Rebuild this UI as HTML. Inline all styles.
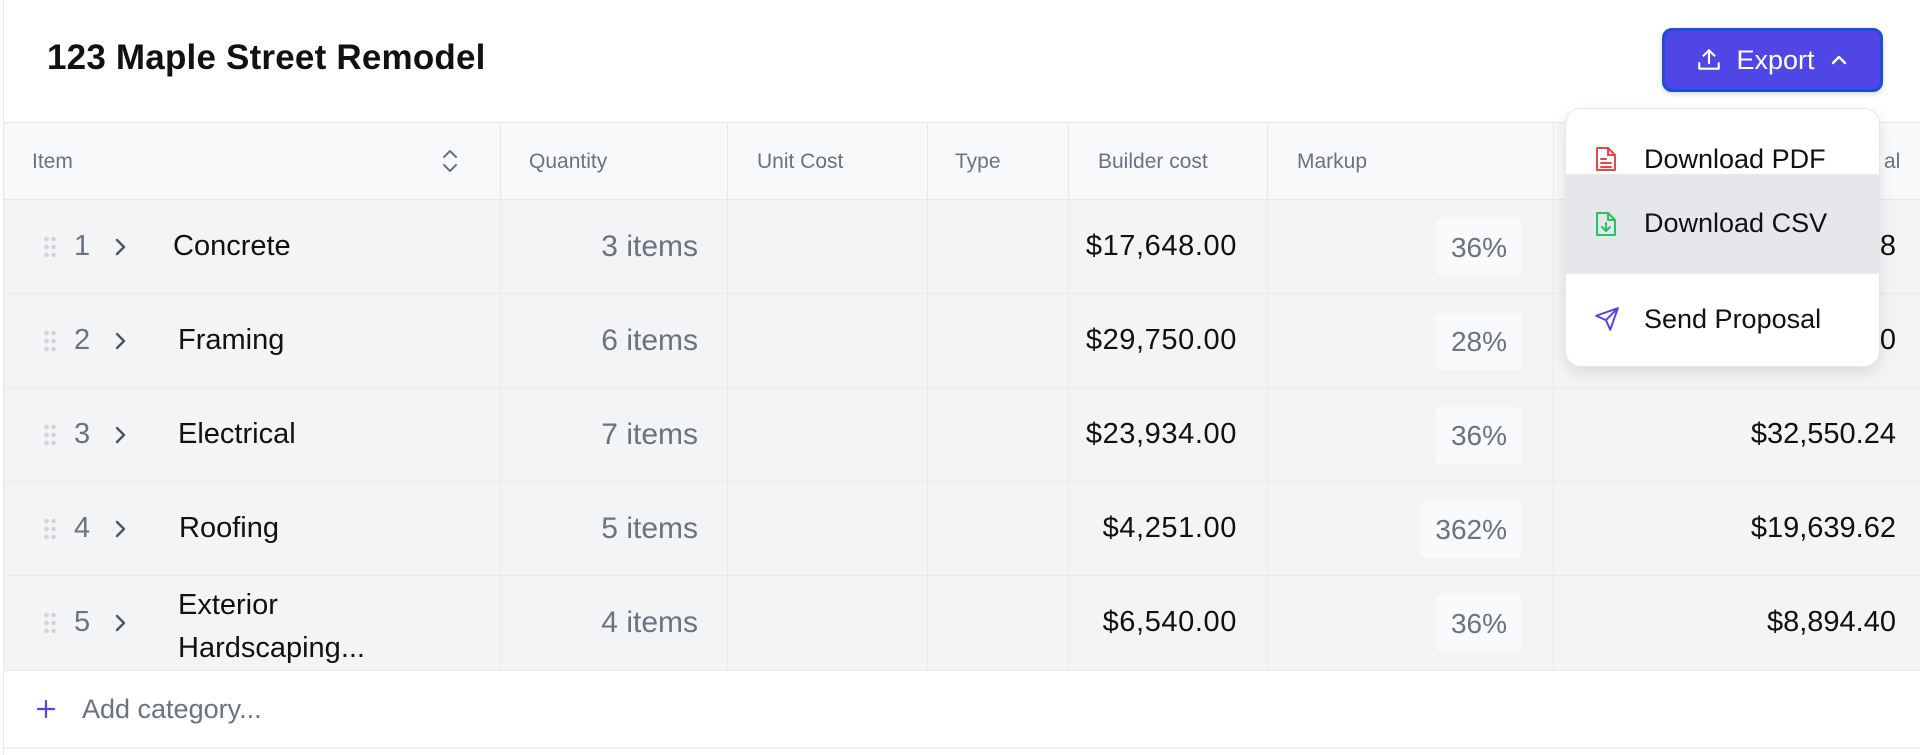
<!DOCTYPE html>
<html><head><style>
*{box-sizing:border-box;margin:0;padding:0}
body{width:1920px;height:755px;background:#fff;font-family:"Liberation Sans",sans-serif;position:relative;overflow:hidden;color:#111}
.frame{position:absolute;left:3px;top:0;width:1917px;height:755px;border-left:1px solid #e5e7eb}
h1{position:absolute;left:47px;top:38px;font-size:35px;font-weight:700;color:#111;letter-spacing:0.2px}
.btn{position:absolute;left:1662px;top:28px;width:221px;height:64px;background:#4f46e5;border:3px solid #1d4ed8;border-radius:10px;color:#fff;font-size:27px;display:flex;align-items:center;justify-content:center;gap:14px;box-shadow:0 2px 6px rgba(0,0,0,.15)}
.hdr{position:absolute;left:4px;top:122px;width:1916px;height:78px;background:#f8f9fb;border-top:1px solid #e5e7eb;border-bottom:1px solid #e5e7eb}
.h{position:absolute;top:27px;font-size:21px;color:#6b7280}
.vl{position:absolute;top:122px;height:549px;width:1px;background:#e8e9ec}
.row{position:absolute;left:4px;width:1916px;height:94px;background:#f3f4f6;border-bottom:1px solid #e9eaee}
.row .c{position:absolute;font-size:29px}
.num{left:70px;color:#6b7280;top:30px}
.nm{left:174px;color:#111}
.qty{right:1222px;color:#6b7280;top:30px;font-size:30px!important}
.bc{right:683px;color:#111;top:30px;letter-spacing:0.6px}
.mk{position:absolute;right:398px;top:19px;height:57px;padding:0 15px;background:#f9fafb;border-radius:6px;color:#6b7280;font-size:28px;line-height:57px}
.tot{right:24px;top:30px;color:#111}
.dot{position:absolute;left:40px;top:36px}
.chev{position:absolute;left:110px;top:36px}
.add{position:absolute;left:4px;top:671px;width:1916px;height:78px;border-bottom:2px solid #eef0f2}
.dd{position:absolute;left:1565px;top:108px;width:315px;height:259px;background:#fff;border:1px solid #e5e7eb;border-radius:16px;box-shadow:0 6px 16px rgba(0,0,0,.1);overflow:hidden}
.di{position:absolute;left:0;width:315px;font-size:27px;color:#111}
.di span{position:absolute;left:78px}
.di svg{position:absolute;left:28px}
</style></head><body>
<div class="frame"></div>
<h1>123 Maple Street Remodel</h1>
<div class="hdr">
<div class="h" style="left:28px">Item</div>
<svg style="position:absolute;left:436px;top:24px" width="20" height="28" viewBox="0 0 20 28" fill="none" stroke="#6b7280" stroke-width="2" stroke-linecap="round" stroke-linejoin="round"><path d="M4 10l6-6 6 6M4 18l6 6 6-6"/></svg>
<div class="h" style="left:525px">Quantity</div>
<div class="h" style="left:753px">Unit Cost</div>
<div class="h" style="left:951px">Type</div>
<div class="h" style="left:1094px">Builder cost</div>
<div class="h" style="left:1293px">Markup</div>
<div class="h" style="left:1880px">al</div>
</div>

<div class="row" style="top:200px"><svg class="dot" width="12" height="22"><g fill="#d1d5db"><circle cx="2.5" cy="3" r="2.3"/><circle cx="9.5" cy="3" r="2.3"/><circle cx="2.5" cy="11" r="2.3"/><circle cx="9.5" cy="11" r="2.3"/><circle cx="2.5" cy="19" r="2.3"/><circle cx="9.5" cy="19" r="2.3"/></g></svg><div class="c num">1</div><svg class="chev" width="14" height="22" fill="none" stroke="#4b5563" stroke-width="2.4" stroke-linecap="round" stroke-linejoin="round"><path d="M3 4l7 7-7 7"/></svg><div class="c nm" style="top:30px;left:169px">Concrete</div><div class="c qty">3 items</div><div class="c bc">$17,648.00</div><div class="mk">36%</div><div class="c tot">$24,001.28</div></div>
<div class="row" style="top:294px"><svg class="dot" width="12" height="22"><g fill="#d1d5db"><circle cx="2.5" cy="3" r="2.3"/><circle cx="9.5" cy="3" r="2.3"/><circle cx="2.5" cy="11" r="2.3"/><circle cx="9.5" cy="11" r="2.3"/><circle cx="2.5" cy="19" r="2.3"/><circle cx="9.5" cy="19" r="2.3"/></g></svg><div class="c num">2</div><svg class="chev" width="14" height="22" fill="none" stroke="#4b5563" stroke-width="2.4" stroke-linecap="round" stroke-linejoin="round"><path d="M3 4l7 7-7 7"/></svg><div class="c nm" style="top:30px">Framing</div><div class="c qty">6 items</div><div class="c bc">$29,750.00</div><div class="mk">28%</div><div class="c tot">$38,080.00</div></div>
<div class="row" style="top:388px"><svg class="dot" width="12" height="22"><g fill="#d1d5db"><circle cx="2.5" cy="3" r="2.3"/><circle cx="9.5" cy="3" r="2.3"/><circle cx="2.5" cy="11" r="2.3"/><circle cx="9.5" cy="11" r="2.3"/><circle cx="2.5" cy="19" r="2.3"/><circle cx="9.5" cy="19" r="2.3"/></g></svg><div class="c num">3</div><svg class="chev" width="14" height="22" fill="none" stroke="#4b5563" stroke-width="2.4" stroke-linecap="round" stroke-linejoin="round"><path d="M3 4l7 7-7 7"/></svg><div class="c nm" style="top:30px">Electrical</div><div class="c qty">7 items</div><div class="c bc">$23,934.00</div><div class="mk">36%</div><div class="c tot">$32,550.24</div></div>
<div class="row" style="top:482px"><svg class="dot" width="12" height="22"><g fill="#d1d5db"><circle cx="2.5" cy="3" r="2.3"/><circle cx="9.5" cy="3" r="2.3"/><circle cx="2.5" cy="11" r="2.3"/><circle cx="9.5" cy="11" r="2.3"/><circle cx="2.5" cy="19" r="2.3"/><circle cx="9.5" cy="19" r="2.3"/></g></svg><div class="c num">4</div><svg class="chev" width="14" height="22" fill="none" stroke="#4b5563" stroke-width="2.4" stroke-linecap="round" stroke-linejoin="round"><path d="M3 4l7 7-7 7"/></svg><div class="c nm" style="top:30px;left:175px">Roofing</div><div class="c qty">5 items</div><div class="c bc">$4,251.00</div><div class="mk">362%</div><div class="c tot">$19,639.62</div></div>
<div class="row" style="top:576px;height:95px"><svg class="dot" width="12" height="22"><g fill="#d1d5db"><circle cx="2.5" cy="3" r="2.3"/><circle cx="9.5" cy="3" r="2.3"/><circle cx="2.5" cy="11" r="2.3"/><circle cx="9.5" cy="11" r="2.3"/><circle cx="2.5" cy="19" r="2.3"/><circle cx="9.5" cy="19" r="2.3"/></g></svg><div class="c num">5</div><svg class="chev" width="14" height="22" fill="none" stroke="#4b5563" stroke-width="2.4" stroke-linecap="round" stroke-linejoin="round"><path d="M3 4l7 7-7 7"/></svg><div class="c nm" style="top:8px;line-height:43px">Exterior<br>Hardscaping...</div><div class="c qty">4 items</div><div class="c bc">$6,540.00</div><div class="mk">36%</div><div class="c tot">$8,894.40</div></div>

<div class="vl" style="left:500px"></div><div class="vl" style="left:727px"></div><div class="vl" style="left:927px"></div><div class="vl" style="left:1068px"></div><div class="vl" style="left:1267px"></div><div class="vl" style="left:1553px"></div>

<div class="add"><svg style="position:absolute;left:32px;top:28px" width="20" height="20" stroke="#4f46e5" stroke-width="2.2" stroke-linecap="round"><path d="M10 2v16M2 10h16"/></svg><div style="position:absolute;left:78px;top:23px;font-size:27px;color:#6b7280">Add category...</div></div>

<div class="btn"><svg width="26" height="26" viewBox="0 0 24 24" fill="none" stroke="#fff" stroke-width="2" stroke-linecap="round" stroke-linejoin="round"><path d="M12 15V3M7 8l5-5 5 5M3 15v5h18v-5"/></svg><span>Export</span><svg width="20" height="20" viewBox="0 0 20 20" fill="none" stroke="#fff" stroke-width="2.4" stroke-linecap="round" stroke-linejoin="round"><path d="M4 13l6-6 6 6"/></svg></div>

<div class="dd">
<div class="di" style="top:0;height:65px"><svg style="top:37px" width="24" height="27" viewBox="0 0 24 27" fill="none" stroke="#ef4444" stroke-width="2" stroke-linejoin="round" stroke-linecap="round"><path d="M3 2h11l7 7v15H3z"/><path d="M14 2v7h7M7 13h5M7 17h10M7 21h10"/></svg><span style="top:35px">Download PDF</span></div>
<div class="di" style="top:65px;height:100px;background:#e5e7eb;border-bottom:1px solid #e5e7eb"><svg style="top:37px" width="24" height="27" viewBox="0 0 24 27" fill="none" stroke="#22c55e" stroke-width="2" stroke-linejoin="round" stroke-linecap="round"><path d="M3 2h11l7 7v15H3z"/><path d="M14 2v7h7M12 12v8M8 16l4 4 4-4"/></svg><span style="top:34px">Download CSV</span></div>
<div class="di" style="top:165px;height:94px"><svg style="top:32px" width="26" height="26" viewBox="0 0 24 24" fill="none" stroke="#4f46e5" stroke-width="1.8" stroke-linejoin="round" stroke-linecap="round"><path d="M22 2L11 13M22 2l-7 20-4-9-9-4z"/></svg><span style="top:30px">Send Proposal</span></div>
</div>
</body></html>
